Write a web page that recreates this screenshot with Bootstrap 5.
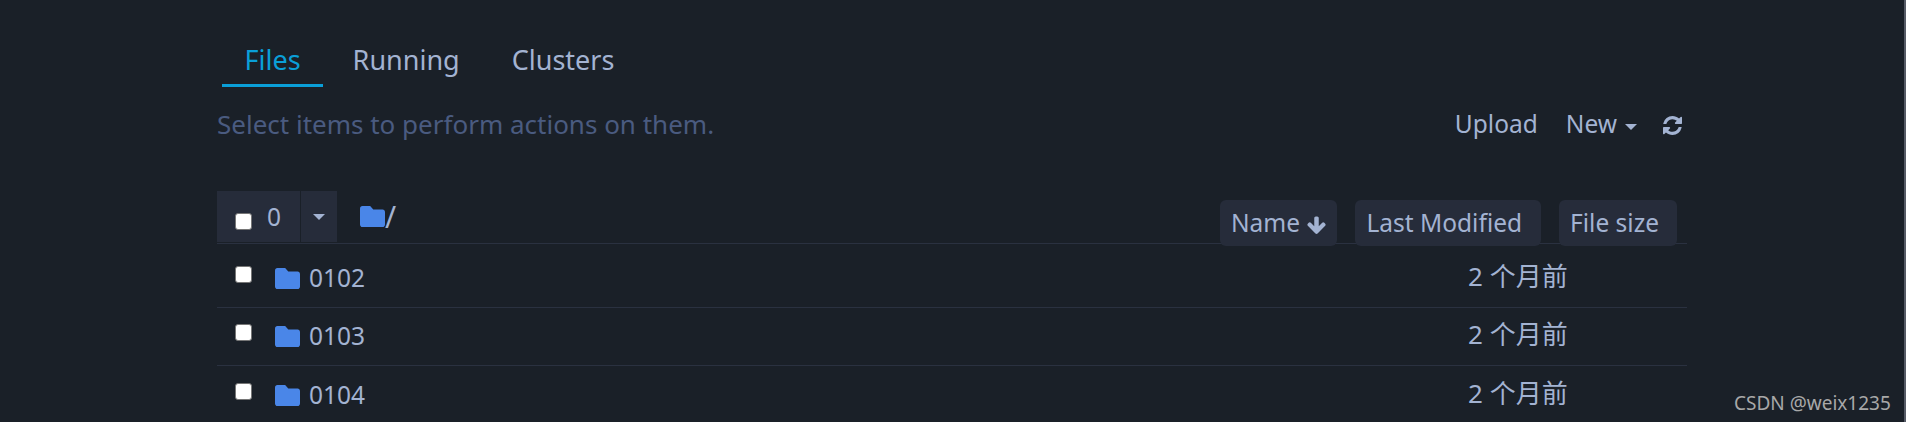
<!DOCTYPE html>
<html lang="en">

<head>
  <meta charset="UTF-8">
  <meta name="viewport" content="width=device-width, initial-scale=1.0">
  <title>Files</title>
  <link href="https://cdn.jsdelivr.net/npm/bootstrap@5.3.0/dist/css/bootstrap.min.css" rel="stylesheet">
  <style>
    html, body {
      height: 422px;
      overflow: hidden;
    }

    body {
      background-color: #1a2028;
      color: #a3b3d2;
      font-family: "Noto Sans", "Noto Sans CJK SC", sans-serif;
      font-size: 24.5px;
      border-right: 2px solid #565b66;
    }

    .page-wrap {
      width: 1470px;
      margin-left: 217px;
      padding-top: 36px;
    }

    .tab-bar {
      padding-left: 5px;
    }

    .tab-bar a {
      color: #a3b3d2;
      font-size: 27px;
      text-decoration: none;
      height: 51px;
      padding: 0 22.5px;
      line-height: 48px;
      margin-right: 7px;
      border-bottom: 3px solid transparent;
    }

    .tab-bar a.active {
      color: #0a9fd8;
      border-bottom-color: #0a9fd8;
    }

    .tool-row {
      height: 76px;
      padding-bottom: 2px;
    }

    .hint-text {
      color: #4a5b80;
      font-size: 26px;
    }

    .tool-link {
      color: #a3b3d2;
      padding-right: 5px;
    }

    .new-link {
      margin-left: 28px;
    }

    .caret-down {
      display: inline-block;
      width: 0;
      height: 0;
      border-left: 6px solid transparent;
      border-right: 6px solid transparent;
      border-top: 6px solid #a3b3d2;
    }

    .new-caret {
      margin-left: 8px;
      margin-top: 5px;
    }

    .reload-icon {
      margin-left: 26px;
      margin-top: 2px;
    }

    .list-head {
      height: 62px;
      margin-top: 19px;
      border-bottom: 1px solid #2a3140;
    }

    .select-box {
      height: 51px;
      width: 120px;
      margin-bottom: 1px;
      background-color: #262c3a;
    }

    .select-count {
      width: 83px;
      padding-left: 18px;
      padding-top: 2px;
      gap: 15px;
    }

    .select-drop {
      border-left: 1px solid #1a2028;
      width: 37px;
    }

    .select-path {
      height: 51px;
      margin-left: 23px;
      margin-bottom: 1px;
    }

    .path-slash {
      font-size: 30px;
      line-height: 1;
    }

    .sort-group {
      gap: 18px;
      margin-right: 10px;
    }

    .sort-btn {
      height: 46px;
      margin-bottom: -3px;
      background-color: #262c3a;
      border-radius: 6px;
      padding: 0 18px 0 11px;
      line-height: 46px;
    }

    .sort-btn.sorted {
      padding-right: 10px;
    }

    .sort-btn.wide-btn {
      padding-right: 19px;
    }

    .file-row {
      height: 58px;
      border-bottom: 1px solid #2a3140;
    }

    .file-row.first-row {
      height: 64px;
      padding-top: 6px;
    }

    .file-row:last-child {
      border-bottom: 0;
    }

    .form-check-input.pick {
      width: 17px;
      height: 17px;
      margin: 0;
      background-color: #fff;
      border: 1px solid #767676;
      border-radius: 3px;
      flex-shrink: 0;
    }

    .form-check-input.pick.head-pick {
      margin-top: 7px;
    }

    .file-row .form-check-input.pick {
      margin-left: 18px;
      margin-bottom: 8px;
    }

    .file-row .folder-icon {
      margin-left: 23px;
    }

    .folder-icon {
      fill: #4a86e8;
      flex-shrink: 0;
    }

    .file-name {
      margin-left: 9px;
    }

    .date-col {
      position: absolute;
      left: 1251px;
      font-size: 26px;
      margin-top: -4px;
    }

    .csdn-mark {
      position: absolute;
      left: 1734px;
      top: 389px;
      color: #a8a8a8;
      font-size: 19px;
    }
  </style>
</head>

<body>

  <div class="page-wrap">
    <div class="tab-bar d-flex">
      <a href="#" class="active">Files</a>
      <a href="#">Running</a>
      <a href="#">Clusters</a>
    </div>

    <div class="tool-row d-flex justify-content-between align-items-center">
      <div class="hint-text">Select items to perform actions on them.</div>
      <div class="d-flex align-items-center tool-link">
        <span>Upload</span>
        <span class="new-link">New</span>
        <span class="caret-down new-caret"></span>
        <svg class="reload-icon" width="19" height="19" viewBox="0 0 1536 1536" fill="#a3b3d2">
          <path d="M1511 928q0 5-1 7-64 268-268 434.5t-478 166.5q-146 0-282.5-55t-243.5-157l-129 129q-19 19-45 19t-45-19-19-45v-448q0-26 19-45t45-19h448q26 0 45 19t19 45-19 45l-137 137q71 66 161 102t187 36q134 0 250-65t186-179q11-17 53-117 8-23 30-23h192q13 0 22.5 9.5t9.5 22.5zm25-800v448q0 26-19 45t-45 19h-448q-26 0-45-19t-19-45 19-45l138-138q-148-137-349-137-134 0-250 65t-186 179q-11 17-53 117-8 23-30 23h-199q-13 0-22.5-9.5t-9.5-22.5v-7q65-268 270-434.5t480-166.5q146 0 284 55.5t245 156.5l130-129q19-19 45-19t45 19 19 45z"/>
        </svg>
      </div>
    </div>

    <div class="list-head d-flex justify-content-between align-items-end">
      <div class="d-flex align-items-end">
        <div class="select-box d-flex">
          <div class="select-count d-flex align-items-center">
            <input class="form-check-input pick head-pick" type="checkbox">
            <span>0</span>
          </div>
          <div class="select-drop d-flex align-items-center justify-content-center">
            <span class="caret-down"></span>
          </div>
        </div>
        <div class="d-flex align-items-center select-path">
          <svg width="25" height="21" viewBox="0 64 512 384" preserveAspectRatio="none" class="folder-icon"><path d="M464 128H272l-64-64H48C21.49 64 0 85.49 0 112v288c0 26.51 21.49 48 48 48h416c26.51 0 48-21.49 48-48V176c0-26.51-21.49-48-48-48z"/></svg>
          <span class="path-slash">/</span>
        </div>
      </div>
      <div class="d-flex sort-group">
        <div class="sort-btn sorted">Name
          <svg width="21" height="21" viewBox="0 0 1792 1792" fill="#a3b3d2"><path d="M1675 832q0 53-37 90l-651 652q-39 37-91 37-53 0-90-37l-651-652q-38-36-38-90 0-53 38-91l74-75q39-37 91-37 53 0 90 37l294 294v-704q0-52 38-90t90-38h128q52 0 90 38t38 90v704l294-294q37-37 90-37 52 0 91 37l75 75q37 39 37 91z"/></svg>
        </div>
        <div class="sort-btn wide-btn">Last Modified</div>
        <div class="sort-btn">File size</div>
      </div>
    </div>

    <div class="file-row first-row d-flex align-items-center position-relative">
      <input class="form-check-input pick" type="checkbox">
      <svg class="folder-icon" width="25" height="21" viewBox="0 64 512 384" preserveAspectRatio="none"><path d="M464 128H272l-64-64H48C21.49 64 0 85.49 0 112v288c0 26.51 21.49 48 48 48h416c26.51 0 48-21.49 48-48V176c0-26.51-21.49-48-48-48z"/></svg>
      <span class="file-name">0102</span>
      <span class="date-col">2 个月前</span>
    </div>
    <div class="file-row d-flex align-items-center position-relative">
      <input class="form-check-input pick" type="checkbox">
      <svg class="folder-icon" width="25" height="21" viewBox="0 64 512 384" preserveAspectRatio="none"><path d="M464 128H272l-64-64H48C21.49 64 0 85.49 0 112v288c0 26.51 21.49 48 48 48h416c26.51 0 48-21.49 48-48V176c0-26.51-21.49-48-48-48z"/></svg>
      <span class="file-name">0103</span>
      <span class="date-col">2 个月前</span>
    </div>
    <div class="file-row d-flex align-items-center position-relative">
      <input class="form-check-input pick" type="checkbox">
      <svg class="folder-icon" width="25" height="21" viewBox="0 64 512 384" preserveAspectRatio="none"><path d="M464 128H272l-64-64H48C21.49 64 0 85.49 0 112v288c0 26.51 21.49 48 48 48h416c26.51 0 48-21.49 48-48V176c0-26.51-21.49-48-48-48z"/></svg>
      <span class="file-name">0104</span>
      <span class="date-col">2 个月前</span>
    </div>
  </div>

  <div class="csdn-mark">CSDN @weix1235</div>

  <script src="https://cdn.jsdelivr.net/npm/bootstrap@5.3.0/dist/js/bootstrap.bundle.min.js"></script>
</body>

</html>
